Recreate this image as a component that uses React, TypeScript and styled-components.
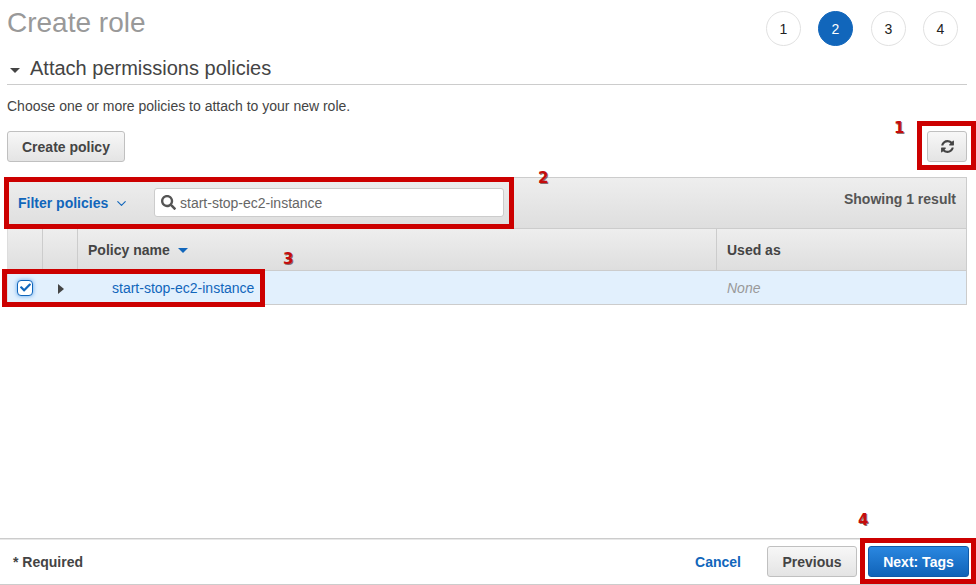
import React from 'react';
import styled, { createGlobalStyle } from 'styled-components';
import { ChevronDown } from 'lucide-react';
import { FaSearch, FaCheck } from 'react-icons/fa';

const GlobalStyle = createGlobalStyle`
  html, body {
    margin: 0;
    padding: 0;
    background: #fff;
    font-family: "Liberation Sans", Arial, sans-serif;
    color: #444;
  }
`;

const Page = styled.div`
  position: relative;
  width: 976px;
  height: 585px;
  overflow: hidden;
  display: flex;
  flex-direction: column;
`;

const Main = styled.main`
  flex: 1;
  padding: 0 9px 0 7px;
`;

const TitleRow = styled.div`
  display: flex;
  justify-content: space-between;
  align-items: flex-start;
  height: 56px;
`;

const Title = styled.h1`
  margin: 6px 0 0;
  font-size: 28px;
  line-height: 34px;
  font-weight: 400;
  color: #999;
`;

const Steps = styled.ol`
  display: flex;
  gap: 17px;
  list-style: none;
  margin: 11px 9px 0 0;
  padding: 0;
`;

const Step = styled.li<{ $active?: boolean }>`
  width: 35px;
  height: 35px;
  box-sizing: border-box;
  border-radius: 50%;
  display: flex;
  align-items: center;
  justify-content: center;
  font-size: 14px;
  color: ${p => (p.$active ? '#fff' : '#222')};
  background: ${p => (p.$active ? '#1166bb' : '#fff')};
  border: 1px solid ${p => (p.$active ? '#1166bb' : '#e1e1e1')};

  &:nth-child(3) {
    margin-left: 1px;
  }
`;

const SectionHeader = styled.div`
  display: flex;
  align-items: center;
  height: 28px;
  border-bottom: 1px solid #ccc;
  font-size: 20px;
  line-height: 24px;
  color: #444;
`;

const SectionTitle = styled.span`
  margin-bottom: 4px;
`;

const Caret = styled.span`
  width: 0;
  height: 0;
  margin: 0 10px 0 3px;
  border-left: 5px solid transparent;
  border-right: 5px solid transparent;
  border-top: 5px solid #444;
`;

const Intro = styled.p`
  margin: 13px 0 0;
  font-size: 14px;
  line-height: 16px;
  color: #444;
`;

const Actions = styled.div`
  display: flex;
  justify-content: space-between;
  margin-top: 17px;
`;

const GreyButton = styled.button`
  height: 31px;
  box-sizing: border-box;
  padding: 0 14px;
  display: inline-flex;
  align-items: center;
  justify-content: center;
  border: 1px solid #c0c0c0;
  border-radius: 3px;
  background: linear-gradient(#f7f7f7, #e4e4e4);
  font: bold 14px "Liberation Sans", Arial, sans-serif;
  color: #444;
`;

const RefreshButton = styled(GreyButton)`
  width: 40px;
  padding: 0;
`;

const Table = styled.section`
  margin-top: 15px;
  border-top: 1px solid #ccc;
  border-left: 1px solid #ddd;
  border-right: 1px solid #ccc;
`;

const Toolbar = styled.div`
  height: 50px;
  display: flex;
  align-items: flex-start;
  padding-left: 10px;
  background: linear-gradient(#eeeeee, #dedede);
  border-bottom: 1px solid #ccc;
`;

const FilterLabel = styled.a`
  display: flex;
  align-items: center;
  gap: 6px;
  height: 50px;
  width: 136px;
  font-size: 14px;
  font-weight: bold;
  color: #1166bb;
`;

const SearchBox = styled.div`
  width: 350px;
  height: 29px;
  margin-top: 10px;
  box-sizing: border-box;
  display: flex;
  align-items: center;
  gap: 4px;
  padding-left: 6px;
  background: #fff;
  border: 1px solid #ccc;
  border-radius: 3px;
  font-size: 14px;
  color: #666;
`;

const ResultCount = styled.div`
  margin-left: auto;
  padding: 13px 10px 0 0;
  font-size: 14px;
  line-height: 16px;
  font-weight: bold;
  color: #555;
`;

const Row = styled.div`
  display: grid;
  grid-template-columns: 34px 35px 639px 1fr;
`;

const HeaderRow = styled(Row)`
  height: 41px;
  background: linear-gradient(#eeeeee, #dedede);
  border-bottom: 1px solid #ccc;
`;

const HeaderCell = styled.div`
  display: flex;
  align-items: center;
  gap: 8px;
  padding-left: 10px;
  font-size: 14px;
  font-weight: bold;
  color: #444;
  border-left: 1px solid #ccc;

  &:first-child {
    border-left: 0;
  }
`;

const SortCaret = styled.span`
  width: 0;
  height: 0;
  margin: 2px 0 0 0;
  border-left: 5px solid transparent;
  border-right: 5px solid transparent;
  border-top: 5px solid #1166bb;
`;

const BodyRow = styled(Row)`
  height: 33px;
  background: #e2f0fd;
  border-bottom: 1px solid #ccc;
  font-size: 14px;
`;

const BodyCell = styled.div<{ $inset?: number }>`
  display: flex;
  align-items: center;
  padding-left: ${p => p.$inset ?? 10}px;
`;

const CheckBox = styled.span`
  width: 16px;
  height: 16px;
  box-sizing: border-box;
  margin-left: -1px;
  display: flex;
  align-items: center;
  justify-content: center;
  background: #fff;
  border: 1px solid #1166bb;
  border-radius: 4px;
  box-shadow: 0 0 4px #5ea6ee;
`;

const ExpandCaret = styled.span`
  width: 0;
  height: 0;
  margin: 2px 0 0 6px;
  border-top: 5px solid transparent;
  border-bottom: 5px solid transparent;
  border-left: 6px solid #444;
`;

const PolicyLink = styled.a`
  margin-left: 25px;
  color: #1166bb;
`;

const Muted = styled.span`
  font-style: italic;
  color: #999;
`;

const Footer = styled.footer`
  height: 47px;
  box-sizing: border-box;
  display: flex;
  align-items: center;
  padding: 0 7px 0 13px;
  border-top: 1px solid #ccc;
  border-bottom: 1px solid #ccc;
  box-shadow: inset 0 1px 0 #e8e8e8;
`;

const Required = styled.span`
  font-size: 14px;
  font-weight: bold;
  color: #444;
`;

const CancelLink = styled.a`
  margin-left: auto;
  margin-right: 26px;
  font-size: 14px;
  font-weight: bold;
  color: #1166bb;
`;

const PreviousButton = styled(GreyButton)`
  width: 90px;
  margin-right: 11px;
`;

const PrimaryButton = styled(GreyButton)`
  width: 101px;
  color: #fff;
  border-color: #0f5aa8;
  background: linear-gradient(#2a87e0, #1063b8);
`;

const Annotation = styled.div<{ $x: number; $y: number; $w: number; $h: number }>`
  position: absolute;
  left: ${p => p.$x}px;
  top: ${p => p.$y}px;
  width: ${p => p.$w}px;
  height: ${p => p.$h}px;
  box-sizing: border-box;
  border: 5px solid #cc0000;
  pointer-events: none;
`;

const Marker = styled.span<{ $x: number; $y: number }>`
  position: absolute;
  left: ${p => p.$x}px;
  top: ${p => p.$y}px;
  font: bold 15px/18px "DejaVu Sans", sans-serif;
  color: #c40c0c;
  text-shadow: 1px 1px 0 rgba(70, 20, 20, 0.6);
`;

const RefreshIcon = () => (
  <svg width="15" height="15" viewBox="0 0 1792 1792" fill="#444">
    <path d="M1639 1056q0 5-1 7-64 268-268 434.5t-478 166.5q-146 0-282.5-55t-243.5-157l-129 129q-19 19-45 19t-45-19-19-45v-448q0-26 19-45t45-19h448q26 0 45 19t19 45-19 45l-137 137q71 66 161 102t187 36q134 0 250-65t186-179q11-17 53-117 8-23 30-23h192q13 0 22.5 9.5t9.5 22.5zm25-800v448q0 26-19 45t-45 19h-448q-26 0-45-19t-19-45 19-45l138-138q-148-137-349-137-134 0-250 65t-186 179q-11 17-53 117-8 23-30 23h-199q-13 0-22.5-9.5t-9.5-22.5v-7q65-268 270-434.5t480-166.5q146 0 284 55.5t245 156.5l130-129q19-19 45-19t45 19 19 45z" />
  </svg>
);

const App: React.FC = () => {
  return (
    <Page>
      <GlobalStyle />
      <Main>
        <TitleRow>
          <Title>Create role</Title>
          <Steps>
            <Step>1</Step>
            <Step $active>2</Step>
            <Step>3</Step>
            <Step>4</Step>
          </Steps>
        </TitleRow>

        <SectionHeader>
          <Caret />
          <SectionTitle>Attach permissions policies</SectionTitle>
        </SectionHeader>
        <Intro>Choose one or more policies to attach to your new role.</Intro>

        <Actions>
          <GreyButton>Create policy</GreyButton>
          <RefreshButton aria-label="Refresh">
            <RefreshIcon />
          </RefreshButton>
        </Actions>

        <Table>
          <Toolbar>
            <FilterLabel>
              Filter policies
              <ChevronDown size={15} strokeWidth={1.8} />
            </FilterLabel>
            <SearchBox>
              <FaSearch size={15} color="#555" />
              start-stop-ec2-instance
            </SearchBox>
            <ResultCount>Showing 1 result</ResultCount>
          </Toolbar>
          <HeaderRow>
            <HeaderCell />
            <HeaderCell />
            <HeaderCell>
              Policy name
              <SortCaret />
            </HeaderCell>
            <HeaderCell>Used as</HeaderCell>
          </HeaderRow>
          <BodyRow>
            <BodyCell>
              <CheckBox>
                <FaCheck size={11} color="#1166bb" />
              </CheckBox>
            </BodyCell>
            <BodyCell>
              <ExpandCaret />
            </BodyCell>
            <BodyCell>
              <PolicyLink>start-stop-ec2-instance</PolicyLink>
            </BodyCell>
            <BodyCell $inset={11}>
              <Muted>None</Muted>
            </BodyCell>
          </BodyRow>
        </Table>
      </Main>

      <Footer>
        <Required>* Required</Required>
        <CancelLink>Cancel</CancelLink>
        <PreviousButton>Previous</PreviousButton>
        <PrimaryButton>Next: Tags</PrimaryButton>
      </Footer>

      <Annotation $x={917} $y={121} $w={59} $h={49} />
      <Annotation $x={4} $y={177} $w={510} $h={52} />
      <Annotation $x={2} $y={269} $w={263} $h={38} />
      <Annotation $x={860} $y={538} $w={116} $h={46} />
      <Marker $x={894} $y={119}>1</Marker>
      <Marker $x={538} $y={169}>2</Marker>
      <Marker $x={283} $y={250}>3</Marker>
      <Marker $x={858} $y={511}>4</Marker>
    </Page>
  );
};

export default App;
